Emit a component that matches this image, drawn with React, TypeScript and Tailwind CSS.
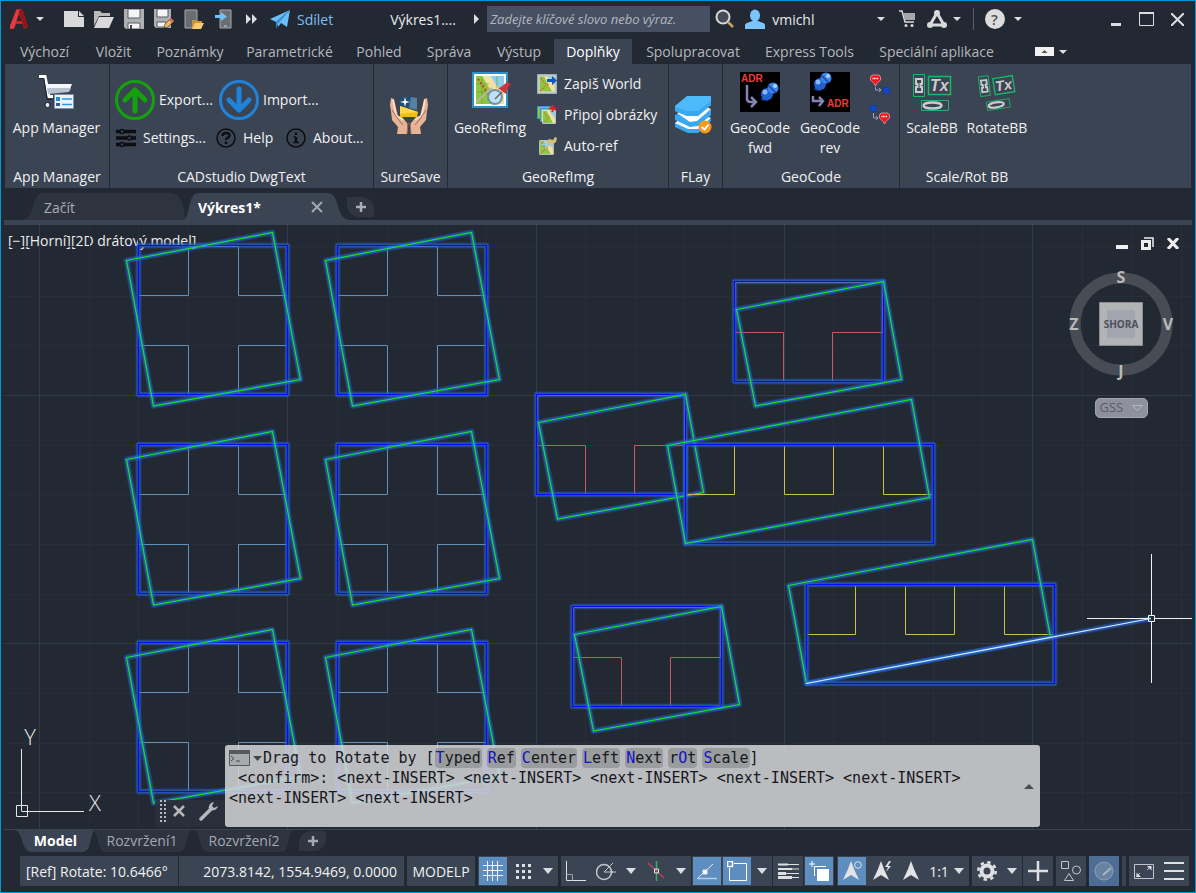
import type { ReactNode } from "react";
import { clsx } from "clsx";

/* ---------- small shared pieces ---------- */

function Caret({ size = "sm" }: { size?: "sm" | "md" }) {
  return size === "md" ? (
    <svg width="10" height="6" viewBox="0 0 10 6" fill="#dcdde0">
      <path d="M0 0h10L5 6z" />
    </svg>
  ) : (
    <svg width="8" height="4" viewBox="0 0 8 4" fill="#dcdde0">
      <path d="M0 0h8L4 4z" />
    </svg>
  );
}

function IconButton({
  label,
  className,
  children,
}: {
  label: string;
  className?: string;
  children: ReactNode;
}) {
  return (
    <button aria-label={label} className={clsx("flex shrink-0 items-center justify-center", className)}>
      {children}
    </button>
  );
}

/* ---------- title bar ---------- */

function LogoIcon() {
  return (
    <svg width="18" height="22" viewBox="0 0 18 22">
      <path d="M7 1h4l2 2 5 16-4 2-1.500-5H6l-2 5H0V18L6 2z" fill="#c8242c" />
      <path d="M11 1l2 2 5 16-4 1L9 4z" fill="#8f151c" />
      <path d="M9 6l2.500 7H6.700z" fill="#222933" />
      <path d="M7 1L0 18v3l4-1L9 4z" fill="#e23b42" />
    </svg>
  );
}

function NewIcon() {
  return (
    <svg width="20" height="20" viewBox="0 0 20 20" fill="#d9d9d9">
      <path d="M0 2h14v6h6v10H0z" />
      <path d="M15 2l5 5h-5z" />
    </svg>
  );
}

function OpenIcon() {
  return (
    <svg width="20" height="20" viewBox="0 0 20 20">
      <path d="M0 2h6l2 2h8v3H5L0 17z" fill="#b9b9b9" />
      <path d="M5 8h15l-5 11H0z" fill="#d9d9d9" />
    </svg>
  );
}

function SaveIcon() {
  return (
    <svg width="20" height="20" viewBox="0 0 20 20">
      <path d="M0 0h20v20H2l-2-2z" fill="#b0b0b0" />
      <path d="M4 0h12v9H4z" fill="#f4f4f4" stroke="#555b66" />
      <path d="M4 14h12v6H4z" fill="#f4f4f4" stroke="#555b66" />
      <path d="M6 16h2v4H6z" fill="#444" />
    </svg>
  );
}

function SaveAsIcon() {
  return (
    <svg width="20" height="20" viewBox="0 0 20 20">
      <path d="M0 0h17v19H2l-2-2z" fill="#b0b0b0" />
      <path d="M3 0h11v8H3z" fill="#f4f4f4" stroke="#555b66" />
      <path d="M3 13h9v5H3z" fill="#f4f4f4" stroke="#555b66" />
      <path d="M10 19l1-4 6-6 3 3-6 6z" fill="#f0b95a" stroke="#222933" strokeWidth=".6" />
      <path d="M17 9l3 3-2 2-3-3z" fill="#d86b57" />
    </svg>
  );
}

function DeviceOpenIcon() {
  return (
    <svg width="20" height="20" viewBox="0 0 20 20">
      <path d="M1 1h12v18H1z" fill="#6a6d72" stroke="#a7a9ad" />
      <path d="M8 11h4l1 1h5v7H8z" fill="#c99433" />
      <path d="M11 14h9l-3 6H8z" fill="#f6ca73" />
    </svg>
  );
}

function DeviceSaveIcon() {
  return (
    <svg width="20" height="20" viewBox="0 0 20 20">
      <path d="M6 1h11v18H6z" fill="#6a6d72" stroke="#a7a9ad" />
      <path d="M1 6h6V3l6 4.500L7 12V9H1z" fill="#6fc1ff" />
      <path d="M10 17h3" stroke="#d9d9d9" />
    </svg>
  );
}

function PlaneIcon() {
  return (
    <svg width="20" height="19" viewBox="0 0 20 19" fill="#69bdfb">
      <path d="M20 0L0 9l6 3z" />
      <path d="M20 0L8 12v5l3-4 6 4z" />
      <path d="M20 0L6 12v7l2-5z" fill="#3f92cf" />
    </svg>
  );
}

function TitleBar() {
  return (
    <header className="flex h-9 items-center text-[#e8e9eb]">
      <div className="flex items-center pl-[9px]">
        <LogoIcon />
        <IconButton label="Application menu" className="ml-2 w-2"><Caret /></IconButton>
        <div className="ml-5 flex items-center gap-[10px]">
          <IconButton label="New"><NewIcon /></IconButton>
          <IconButton label="Open"><OpenIcon /></IconButton>
          <IconButton label="Save"><SaveIcon /></IconButton>
          <IconButton label="Save as"><SaveAsIcon /></IconButton>
          <IconButton label="Open from mobile"><DeviceOpenIcon /></IconButton>
          <IconButton label="Save to mobile"><DeviceSaveIcon /></IconButton>
        </div>
        <IconButton label="More" className="ml-3">
          <svg width="12" height="10" viewBox="0 0 12 10" fill="#dcdde0">
            <path d="M0 0l5 5-5 5zM6 0l5 5-5 5z" />
          </svg>
        </IconButton>
        <button className="ml-3 flex items-center gap-[7px] text-[14px] text-[#7fbdf0]">
          <PlaneIcon />
          Sdílet
        </button>
      </div>
      <div className="ml-[57px] flex items-center">
        <span className="w-[84px] whitespace-nowrap text-[14px]">Výkres1....</span>
        <svg width="5" height="10" viewBox="0 0 5 10" fill="#dcdde0"><path d="M0 0l5 5-5 5z" /></svg>
        <input
          type="search"
          aria-label="Hledat"
          placeholder="Zadejte klíčové slovo nebo výraz."
          className="ml-2 h-[26px] w-[223px] bg-[#475063] px-[3px] text-[13px] italic text-white outline-none placeholder:text-[#b3b7bf]"
        />
        <IconButton label="Search" className="ml-[5px]">
          <svg width="20" height="20" viewBox="0 0 20 20" fill="none">
            <circle cx="8" cy="8" r="6.500" fill="#454c58" stroke="#d9d9d9" strokeWidth="2" />
            <path d="M13 13l5 5" stroke="#c99f63" strokeWidth="2.500" />
          </svg>
        </IconButton>
        <button className="ml-[10px] flex items-center gap-[7px] text-[14px]">
          <svg width="20" height="20" viewBox="0 0 20 20" fill="#7cc4fb">
            <ellipse cx="10" cy="6.500" rx="5" ry="6" />
            <path d="M0 20v-4c0-2 5-3 7-4h6c2 1 7 2 7 4v4z" />
          </svg>
          vmichl
        </button>
      </div>
      <div className="ml-[62px] flex items-center">
        <IconButton label="Account menu"><Caret /></IconButton>
        <IconButton label="Store" className="ml-[14px]">
          <svg width="17" height="18" viewBox="0 0 17 18" fill="none">
            <path d="M0 1h3l3 11h9" stroke="#d9d9d9" strokeWidth="1.500" />
            <path d="M4 3h12v7H6z" fill="#a5a7ab" />
            <circle cx="7" cy="15.500" r="1.500" fill="#d9d9d9" />
            <circle cx="13" cy="15.500" r="1.500" fill="#d9d9d9" />
          </svg>
        </IconButton>
        <IconButton label="Apps" className="ml-[11px]">
          <svg width="20" height="18" viewBox="0 0 20 18" fill="none">
            <path d="M10 3L3 15h14z" stroke="#d9d9d9" strokeWidth="3" />
            <g fill="#d9d9d9">
              <circle cx="10" cy="3" r="3" />
              <circle cx="3" cy="15" r="3" />
              <circle cx="17" cy="15" r="3" />
            </g>
          </svg>
        </IconButton>
        <IconButton label="Apps menu" className="ml-[6px]"><Caret /></IconButton>
        <span className="ml-3 h-[22px] w-px bg-[#59606c]" />
        <IconButton label="Help" className="ml-[11px] h-5 w-5 rounded-full bg-[#dcdcdc] text-[15px] font-semibold text-[#4a5059]">
          ?
        </IconButton>
        <IconButton label="Help menu" className="ml-[9px]"><Caret /></IconButton>
      </div>
      <div className="ml-auto flex items-center gap-[17px] pr-[11px]">
        <IconButton label="Minimize">
          <svg width="12" height="14" viewBox="0 0 12 14"><path d="M1 11h10v3H1z" fill="#dcdde0" /></svg>
        </IconButton>
        <IconButton label="Maximize">
          <svg width="15" height="14" viewBox="0 0 15 14" fill="none" stroke="#dcdde0">
            <path d="M.5 1.500v12h14v-12z" />
            <path d="M0 1h15" strokeWidth="2" />
          </svg>
        </IconButton>
        <IconButton label="Close">
          <svg width="13" height="13" viewBox="0 0 13 13" stroke="#dcdde0" strokeWidth="2"><path d="M0 0l13 13M13 0L0 13" /></svg>
        </IconButton>
      </div>
    </header>
  );
}

/* ---------- ribbon ---------- */

const ribbonTabs = [
  { label: "Výchozí", width: "w-[75px]" },
  { label: "Vložit", width: "w-[63px]" },
  { label: "Poznámky", width: "w-[90px]" },
  { label: "Parametrické", width: "w-[109px]" },
  { label: "Pohled", width: "w-[70px]" },
  { label: "Správa", width: "w-[70px]" },
  { label: "Výstup", width: "w-[70px]" },
  { label: "Doplňky", width: "w-[78px]", active: true },
  { label: "Spolupracovat", width: "w-[122px]" },
  { label: "Express Tools", width: "w-[111px]" },
  { label: "Speciální aplikace", width: "w-[143px]" },
];

function RibbonTabs() {
  return (
    <nav className="mt-[2px] flex h-[25px] items-stretch pl-[6px]">
      {ribbonTabs.map((t) => (
        <button
          key={t.label}
          className={clsx(
            "shrink-0 whitespace-nowrap text-center text-[14px]",
            t.width,
            t.active ? "bg-[#3b4453] text-white" : "text-[#b4b7bc]",
          )}
        >
          {t.label}
        </button>
      ))}
      <IconButton label="Minimize ribbon" className="ml-[27px] gap-[5px]">
        <svg width="19" height="9" viewBox="0 0 19 9">
          <path d="M0 0h19v9H0z" fill="#f1f1f1" />
          <path d="M6.500 6L9.500 3l3 3z" fill="#555" />
        </svg>
        <Caret />
      </IconButton>
    </nav>
  );
}

function Panel({ title, className, children }: { title: string; className: string; children: ReactNode }) {
  return (
    <section className={clsx("flex shrink-0 flex-col border-[#222933] text-[14px] text-[#f0f1f2]", className)}>
      <div className="flex-1 pt-2">{children}</div>
      <h2 className="pb-px text-center leading-5">{title}</h2>
    </section>
  );
}

function BigButton({ icon, className, children }: { icon: ReactNode; className?: string; children?: ReactNode }) {
  return (
    <button className={clsx("flex flex-col items-center whitespace-nowrap leading-5", className)}>
      <span className="flex h-[46px] items-start justify-center">{icon}</span>
      {children}
    </button>
  );
}

function RowButton({ icon, className, children }: { icon: ReactNode; className?: string; children: ReactNode }) {
  return (
    <button className={clsx("flex shrink-0 items-center whitespace-nowrap text-left leading-5", className)}>
      {icon}
      {children}
    </button>
  );
}

function AppManagerIcon() {
  return (
    <svg width="38" height="40" viewBox="0 -2 38 40">
      <path d="M1 2.500h6l4 20h4" fill="none" stroke="#fff" strokeWidth="3" />
      <path d="M1 4.500h5l3 21h5" fill="none" stroke="#1b2033" strokeWidth="1" />
      <path d="M8 10h26l-2 5H9z" fill="#f4f6fa" />
      <path d="M9 14h24l-2 4-21 2z" fill="#b9c2d0" />
      <circle cx="9.500" cy="31" r="2.500" fill="#e9edf3" stroke="#1b2033" />
      <path d="M16.500 20.500h19v14h-19z" fill="#eaf3fa" stroke="#7c93ad" />
      <path d="M18 23h4v4h-4z" fill="#1e8fe0" />
      <path d="M18 29h4v3h-4z" fill="#3a5b96" />
      <path d="M24 25h10M24 30.500h10" stroke="#2b9ae6" strokeWidth="1.500" />
    </svg>
  );
}

function ArrowCircleIcon({ down }: { down?: boolean }) {
  const color = down ? "#1f83dc" : "#14a10c";
  return (
    <svg width="40" height="40" viewBox="0 0 40 40" fill="none" stroke={color}>
      <circle cx="20" cy="20" r="18.500" strokeWidth="3" />
      <path
        d={down ? "M20 9v20M10 20l10 10 10-10" : "M20 31V11M10 20l10-10 10 10"}
        strokeWidth="5"
        strokeLinecap="round"
        strokeLinejoin="round"
      />
    </svg>
  );
}

function SettingsIcon() {
  return (
    <svg width="20" height="20" viewBox="0 0 20 20" stroke="#0c0e12" fill="#3b4453">
      <path d="M0 3.500h20M0 10h20M0 16.500h20" strokeWidth="3.500" />
      <circle cx="6" cy="3.500" r="2" strokeWidth="1.500" />
      <circle cx="13.500" cy="10" r="2" strokeWidth="1.500" />
      <circle cx="6" cy="16.500" r="2" strokeWidth="1.500" />
    </svg>
  );
}

function HelpIcon() {
  return (
    <svg width="20" height="20" viewBox="0 0 20 20" fill="none" stroke="#0c0e12">
      <circle cx="10" cy="10" r="9" strokeWidth="1.500" />
      <path d="M6.500 8c0-4 7-4 7-.5 0 2.500-3.500 2-3.500 4.500" strokeWidth="2.500" />
      <path d="M10 13.500v2.500" strokeWidth="2.500" />
    </svg>
  );
}

function AboutIcon() {
  return (
    <svg width="20" height="20" viewBox="0 0 20 20" fill="none" stroke="#0c0e12">
      <circle cx="10" cy="10" r="9" strokeWidth="1.500" />
      <path d="M10 4.500v2.500M10 9v5.500" strokeWidth="2.500" />
      <path d="M7.500 9h2.500M7 14.500h6" strokeWidth="1.500" />
    </svg>
  );
}

function HandsIcon() {
  return (
    <svg width="40" height="40" viewBox="0 0 40 40">
      <path d="M12 2h10l6 1v12l-17-4z" fill="#1f4f78" />
      <path d="M22 2l6 1v12l-8-2z" fill="#55809f" />
      <path d="M11 11l18 6-1 5H11z" fill="#f3bd17" />
      <path d="M11 11l9 3 9 3-18 2z" fill="#ffd84c" />
      <path d="M16 2l1 4 4 1-4 1-1 4-1-4-4-1 4-1z" fill="#fff" />
      <path d="M2 3l3 1 2 9 2 8 4 1 5 6 1 5-1 6H8l1-7-6-7-1-9-1-6z" fill="#e6b497" />
      <path d="M38 3l-3 1-2 9-2 8-4 1-5 6-1 5 1 6h10l-1-7 6-7 1-9 1-6z" fill="#e6b497" />
      <path d="M4 5l3 15 7 5M36 5l-3 15-7 5" fill="none" stroke="#fbe3d3" strokeWidth="1.500" />
      <path d="M3 15l6 9 5 6M37 15l-6 9-5 6M19 28l-1 10M21 28l1 10" fill="none" stroke="#a5694f" />
    </svg>
  );
}

function MapIcon() {
  return (
    <svg width="36" height="38" viewBox="1 0 36 38" className="overflow-visible">
      <path d="M2 1h34v34H2z" fill="#fff" stroke="#2c93c9" strokeWidth="2" />
      <path d="M5 4h28v28H5z" fill="#8fc63f" />
      <path d="M18 4h15v18L23 14z" fill="#8fcdf0" />
      <path d="M11 4h9l5 9 8 6v13h-9l-4-13z" fill="#f4e0a4" />
      <path d="M5 12h13M5 20h13M11 4v28M26 4v12" stroke="#6aa52c" strokeWidth=".7" />
      <path d="M7 7l7 10 2 6" fill="none" stroke="#d8302c" strokeWidth="2" strokeDasharray="2 2" />
      <path d="M5 30l16-14" stroke="#b9b9a4" strokeWidth="2" />
      <circle cx="24" cy="25" r="7" fill="#bfe0f3" stroke="#7592a5" strokeWidth="2" />
      <path d="M24 27l7-7" stroke="#666" strokeWidth="1.500" />
      <path d="M27 16l3-1 5-4 1-2 4 4-2 1-2 5-1 3z" fill="#c9363d" />
    </svg>
  );
}

function MiniMap() {
  return (
    <>
      <path d="M2 2h16v16H2z" fill="#8fc63f" stroke="#d6e6ee" />
      <path d="M10 2.500h7.500v11z" fill="#8fcdf0" />
      <path d="M7 2.500h3.500l7 9v6H15z" fill="#f4e0a4" />
      <path d="M4 4l4 6M3 17l9-8" stroke="#d66a3c" strokeWidth="1.200" strokeDasharray="2 1" />
    </>
  );
}

function WorldIcon() {
  return (
    <svg width="20" height="20" viewBox="0 0 20 20">
      <path d="M0 0h20v20H0z" fill="#a5adb7" />
      <MiniMap />
      <path d="M10 5h5V2l5 4.500-5 4.500V8h-5z" fill="#1358c0" />
    </svg>
  );
}

function AttachIcon() {
  return (
    <svg width="20" height="20" viewBox="0 0 20 20">
      <path d="M.5 1.500h13v12H.5z" fill="#8fc63f" stroke="#3a97c9" />
      <path d="M3.500 3.500h13v13h-13z" fill="#9ed04d" stroke="#3a97c9" />
      <g transform="translate(4 4) scale(.8)"><MiniMap /></g>
      <path d="M15.500 0v7M12 3.500h7" stroke="#ed1c24" strokeWidth="2" />
    </svg>
  );
}

function AutoRefIcon() {
  return (
    <svg width="20" height="20" viewBox="0 0 20 20">
      <g transform="translate(1 3) scale(.85)"><MiniMap /></g>
      <path d="M8 8l4-5 4 1 2-3 2 1-1 4-4 3-5 2z" fill="#d9bd7b" />
      <path d="M9 4v9M4.500 8.500h9" stroke="#8ed2ff" strokeWidth="1.500" />
    </svg>
  );
}

function LayersIcon() {
  return (
    <svg width="39" height="39" viewBox="0 0 39 39">
      <path d="M1 28l5-4 11 7 19-9 1 4-13 12H14L1 32z" fill="#39a9ef" />
      <path d="M1 28l5-4 11 5 15-8 5 2-13 11H14z" fill="#fff" />
      <path d="M1 20l6-3 10 5 15-9 5 2v5L24 31l-8 1L1 25z" fill="#39a9ef" />
      <path d="M3 18l4-2 9 4 16-8 5 2-14 12-7 1z" fill="#fff" />
      <path d="M1 11L13 1h24v9L24 21H13L1 16z" fill="#4dbbfb" />
      <path d="M1 12l12 4h11L37 6v4L24 21H13L1 16z" fill="#39a9ef" />
      <circle cx="31" cy="32" r="6.500" fill="#f79a1b" />
      <path d="M27.500 32l3 2.500 4-5" fill="none" stroke="#fff" strokeWidth="2" />
    </svg>
  );
}

function Pins() {
  return (
    <g>
      <path d="M2 18l2-6 6-2 3 6-5 3z" fill="#1743a8" />
      <circle cx="8" cy="12" r="6" fill="#2061cf" />
      <circle cx="14" cy="6" r="5.500" fill="#3a83ea" />
      <path d="M9 3l8 8" stroke="#1743a8" strokeWidth="1.500" />
      <circle cx="16" cy="4" r="2" fill="#a8d4ff" />
      <circle cx="6" cy="10" r="2.500" fill="#84b8f8" />
    </g>
  );
}

function GeoCodeIcon({ reverse }: { reverse?: boolean }) {
  return (
    <svg width="40" height="40" viewBox="0 0 40 40">
      <path d="M0 0h40v40H0z" fill="#000" />
      <g transform={reverse ? "translate(2 0)" : "translate(19 10)"}>
        <Pins />
      </g>
      <path
        d={reverse ? "M3 24v5h9M9 25l4 4-4 5" : "M7 13v14q0 3 4 3h4M11 25l5 5-5 5"}
        fill="none"
        stroke="#8482b4"
        strokeWidth="2.500"
      />
      <text
        x={reverse ? 17 : 1}
        y={reverse ? 35 : 10}
        fontFamily="Liberation Sans, sans-serif"
        fontSize="10"
        fontWeight="700"
        fill="#ef3b34"
      >
        ADR
      </text>
    </svg>
  );
}

function PinLinkIcon({ reverse }: { reverse?: boolean }) {
  return (
    <svg width="20" height="20" viewBox="0 0 20 20">
      <g transform={reverse ? "translate(9 7)" : "translate(0 0)"}>
        <path d="M2 1h7l1.500 2v3L7 9.500 5.500 12 4 9.500.5 6V3z" fill="#ef1720" stroke="#f6c9cb" strokeWidth=".6" />
        <path d="M2.500 4.500h6" stroke="#fff" strokeWidth="1.500" strokeDasharray="1 .5" />
      </g>
      <g transform={reverse ? "translate(0 0)" : "translate(13 13)"}>
        <path d="M.5.5h6v6h-6z" fill="#1048c8" stroke="#0c3596" strokeDasharray="1 1" />
      </g>
      <path
        d={reverse ? "M3.500 8v5h4M6 11l2 2-2 2" : "M5.500 13v3h5M9 14l2 2-2 2"}
        fill="none"
        stroke="#9b9bd0"
      />
    </svg>
  );
}

function BoundingIcon({ rotated }: { rotated?: boolean }) {
  return (
    <svg width="40" height="40" viewBox="0 0 40 40" fill="none">
      <g transform={rotated ? "rotate(-7 7 14) translate(1 2) scale(.9)" : undefined}>
        <path d="M1.500 2.500h11v22h-11z" stroke="#19b66b" />
        <path d="M4 7h6v5H8.500v3H10v5H4v-5h1.500v-3H4z" stroke="#c9cbce" strokeWidth="2" />
      </g>
      <g transform={rotated ? "rotate(-9 27 13) translate(2 1) scale(.9)" : undefined}>
        <path d="M16.500 4.500h22v18h-22z" stroke="#19b66b" strokeWidth="1.500" />
        <text x="18" y="19" fontFamily="Liberation Sans, sans-serif" fontSize="16" fontStyle="italic" fontWeight="700" fill="#c9cbce">
          Tx
        </text>
      </g>
      <g transform={rotated ? "rotate(-9 22 34) translate(2 4) scale(.85)" : undefined}>
        <path d="M9.500 28.500h27v10h-27z" stroke="#19b66b" />
        <ellipse cx="20.500" cy="33.500" rx="9" ry="3" stroke="#c9cbce" strokeWidth="2.500" />
      </g>
    </svg>
  );
}

function Ribbon() {
  return (
    <div className="mx-1 flex h-[124px] overflow-hidden bg-[#3b4453]">
      <Panel title="App Manager" className="w-[105px] border-r">
        <BigButton icon={<AppManagerIcon />} className="w-full pr-px">App Manager</BigButton>
      </Panel>
      <Panel title="CADstudio DwgText" className="w-[264px] border-r">
        <div className="flex h-10 items-center pl-[5px] pt-[16px]">
          <RowButton icon={<ArrowCircleIcon />} className="w-[104px] gap-1">Export...</RowButton>
          <RowButton icon={<ArrowCircleIcon down />} className="gap-1">Import...</RowButton>
        </div>
        <div className="mt-4 flex items-center pl-[6px]">
          <RowButton icon={<SettingsIcon />} className="w-[100px] gap-[7px]">Settings...</RowButton>
          <RowButton icon={<HelpIcon />} className="w-[70px] gap-[7px]">Help</RowButton>
          <RowButton icon={<AboutIcon />} className="gap-[7px]">About...</RowButton>
        </div>
      </Panel>
      <Panel title="SureSave" className="w-[74px] border-r">
        <BigButton icon={<HandsIcon />} className="w-full pr-1 pt-[23px]" />
      </Panel>
      <Panel title="GeoRefImg" className="w-[221px] border-r">
        <div className="flex pl-1">
          <BigButton icon={<MapIcon />} className="w-[76px]">GeoRefImg</BigButton>
          <div className="ml-[9px] flex flex-col gap-[11px] pt-[2px]">
            <RowButton icon={<WorldIcon />} className="gap-[7px]">Zapiš World</RowButton>
            <RowButton icon={<AttachIcon />} className="gap-[7px]">Připoj obrázky</RowButton>
            <RowButton icon={<AutoRefIcon />} className="gap-[7px]">Auto-ref</RowButton>
          </div>
        </div>
      </Panel>
      <Panel title="FLay" className="w-[54px] border-r">
        <BigButton icon={<LayersIcon />} className="w-full pr-1 pt-[23px]" />
      </Panel>
      <Panel title="GeoCode" className="w-[177px] border-r">
        <div className="flex pl-[2px]">
          <BigButton icon={<GeoCodeIcon />} className="w-[70px]">
            <span>GeoCode<br />fwd</span>
          </BigButton>
          <BigButton icon={<GeoCodeIcon reverse />} className="w-[70px]">
            <span>GeoCode<br />rev</span>
          </BigButton>
          <div className="ml-[5px] flex flex-col gap-[11px] pt-[2px]">
            <IconButton label="Link forward"><PinLinkIcon /></IconButton>
            <IconButton label="Link reverse"><PinLinkIcon reverse /></IconButton>
          </div>
        </div>
      </Panel>
      <Panel title="Scale/Rot BB" className="w-[134px]">
        <div className="flex pl-px">
          <BigButton icon={<BoundingIcon />} className="w-[62px]">ScaleBB</BigButton>
          <BigButton icon={<BoundingIcon rotated />} className="w-[68px]">RotateBB</BigButton>
        </div>
      </Panel>
    </div>
  );
}

/* ---------- drawing tabs ---------- */

function DocumentTabs() {
  return (
    <div className="mx-[3px] mt-1 flex h-7 shrink-0 items-stretch">
      <button className="ml-[18px] w-[163px] bg-[#2d3440] pl-[22px] pt-[2px] text-left text-[14px] text-[#a9adb4] [clip-path:path('M0_28C14_26_8_1_22_1H148C158_1_163_12_163_28Z')]">
        Začít
      </button>
      <div className="-ml-[2px] flex w-[166px] items-center bg-[#3b4453] pl-[15px] pt-[2px] text-[14px] font-bold text-white [clip-path:path('M0_28C8_26_4_1_16_1H144C158_1_152_26_166_28Z')]">
        <button>Výkres1*</button>
        <IconButton label="Close drawing" className="ml-auto mr-[26px]">
          <svg width="12" height="12" viewBox="0 0 12 12" stroke="#a3a7ae" strokeWidth="2"><path d="M1 1l10 10M11 1L1 11" /></svg>
        </IconButton>
      </div>
      <IconButton
        label="New drawing"
        className="-ml-[2px] mb-[3px] mt-[5px] w-[27px] rounded-bl-xl rounded-tr-xl bg-[#2f3642]"
      >
        <svg width="10" height="10" viewBox="0 0 10 10" stroke="#a9adb4" strokeWidth="2.500"><path d="M5 0v10M0 5h10" /></svg>
      </IconButton>
    </div>
  );
}

/* ---------- model space ---------- */

const minorX = Array.from({ length: 24 }, (_, i) => Math.round(39 + i * 49.65) + 0.5);
const minorY = Array.from({ length: 12 }, (_, i) => Math.round(246 + i * 49.65) + 0.5);

type Shape = { rect: string; frame: string; detail: string; stroke: string };

const room: Shape = {
  rect: "M138.500 245.500H287.500V394.500H138.500Z",
  frame: "M126.500 260.500L272.500 232.500L300.500 379.500L153.500 406Z",
  detail: "M138.500 295.500H188.500V246.500H238.500V295.500H287.500M138.500 345.500H188.500V394.500H238.500V345.500H287.500",
  stroke: "#6291bb",
};

const hall: Shape = {
  rect: "M734.500 281.500H883.500V381.500H734.500Z",
  frame: "M736.500 309.500L883.500 281.500L901.500 379.500L755.500 406Z",
  detail: "M734.500 332.500H783.500V381.500H832.500V332.500H882.500V282.500H735.500Z",
  stroke: "#c25a5c",
};

const strip: Shape = {
  rect: "M685.500 444.500H933.500V543.500H685.500Z",
  frame: "M667.500 445.500L911.500 399.500L929.500 497.500L685.500 543.500Z",
  detail: "M686.500 494.500H734.500V446M784.500 446V494.500H833.500V446M883.500 446V494.500H932.500",
  stroke: "#c9c24a",
};

const placed: { shape: Shape; x: number; y: number }[] = [
  ...[0, 1, 2].flatMap((row) =>
    [0, 1].map((col) => ({ shape: room, x: Math.round(col * 198.6), y: Math.round(row * 198.6) })),
  ),
  { shape: hall, x: 0, y: 0 },
  { shape: hall, x: -198, y: 113 },
  { shape: hall, x: -162, y: 325 },
  { shape: strip, x: 0, y: 0 },
  { shape: strip, x: 121, y: 140 },
];

function Glow({ d, color }: { d: string; color: string }) {
  return (
    <>
      <path d={d} stroke="#2460cc" strokeOpacity=".35" strokeWidth="6" strokeLinejoin="round" />
      <path d={d} stroke="#2a6ae0" strokeOpacity=".45" strokeWidth="4" strokeLinejoin="round" />
      <path d={d} stroke={color} strokeWidth="1.200" />
    </>
  );
}

function Drawing() {
  return (
    <svg
      className="absolute inset-0 h-full w-full"
      viewBox="4 225 1188 604"
      preserveAspectRatio="xMinYMin slice"
      fill="none"
    >
      {minorX.map((x, i) => (
        <path key={x} d={`M${x} 225V829`} stroke={i % 5 === 0 ? "#333a49" : "#272e39"} />
      ))}
      {minorY.map((y, i) => (
        <path key={y} d={`M4 ${y}H1192`} stroke={i % 5 === 3 ? "#333a49" : "#272e39"} />
      ))}

      {placed.map(({ shape, x, y }) => (
        <g key={`${x} ${y} ${shape.stroke}`} transform={`translate(${x} ${y})`}>
          <path d={shape.detail} stroke={shape.stroke} />
          <Glow d={shape.rect} color="#0808ff" />
          <Glow d={shape.frame} color="#12e62c" />
        </g>
      ))}

      <Glow d="M806 683.500L1151 618.500" color="#d8ecff" />

      {/* crosshair */}
      <path d="M1087 618.500H1148M1155 618.500H1192M1151.500 554V615M1151.500 622V683" stroke="#f2f2f2" />
      <path d="M1148.500 615.500h6v6h-6z" stroke="#fff" />

      {/* UCS icon */}
      <path d="M16.500 805.500h11v11h-11zM21.500 749V811M21.500 811.500H84" stroke="#e6e6e6" />
      <g fill="#e6e6e6" fontSize="22" fontWeight="300" textAnchor="middle">
        <text x="30" y="745">Y</text>
        <text x="95" y="811">X</text>
      </g>
    </svg>
  );
}

function ViewCube() {
  return (
    <div className="absolute right-[18px] top-[40px] flex flex-col items-center">
      <svg width="106" height="120" viewBox="1068 265 106 120">
        <circle cx="1121" cy="324" r="46" fill="none" stroke="#484d55" strokeWidth="11" />
        <path d="M1099.500 302.500h43v43h-43z" fill="#b2b3b5" stroke="#8a8c90" />
        <path d="M1107 310h28v28h-28z" fill="#a2a5ae" />
        <g fontWeight="700" textAnchor="middle" fill="#b9babc">
          <text x="1121" y="283" fontSize="16">S</text>
          <text x="1074" y="330" fontSize="16">Z</text>
          <text x="1168" y="330" fontSize="16">V</text>
          <text x="1121" y="377" fontSize="16">J</text>
          <text x="1121" y="328" fontSize="10" fill="#4c5058">SHORA</text>
        </g>
      </svg>
      <button className="mt-[13px] flex h-5 w-[53px] items-center justify-between rounded-[5px] border border-[#a3a5b0] bg-[#8e909c] px-1 text-[13px] text-[#5a5c68]">
        GSS
        <svg width="11" height="6" viewBox="0 0 11 6" fill="none" stroke="#b4b6c2"><path d="M.5.5h10l-5 5z" /></svg>
      </button>
    </div>
  );
}

const commandOptions: [string, string, string][] = [
  ["", "T", "yped"],
  ["", "R", "ef"],
  ["", "C", "enter"],
  ["", "L", "eft"],
  ["", "N", "ext"],
  ["r", "O", "t"],
  ["", "S", "cale"],
];

function CommandLine() {
  return (
    <div className="absolute bottom-[2px] left-[151px] flex items-end">
      <div className="flex h-[27px] w-[70px] items-center rounded-l bg-[#2b313c]/90 pb-[6px] pl-1">
        <svg width="8" height="22" viewBox="0 0 8 22" stroke="#b5b7bb" strokeWidth="2" strokeDasharray="2 2">
          <path d="M2 0v22M6 0v22" />
        </svg>
        <IconButton label="Close command line" className="ml-[6px]">
          <svg width="12" height="12" viewBox="0 0 12 12" stroke="#b5b7bb" strokeWidth="2.500"><path d="M1 1l10 10M11 1L1 11" /></svg>
        </IconButton>
        <IconButton label="Customize" className="ml-[14px]">
          <svg width="20" height="20" viewBox="0 0 20 20">
            <path d="M2 18L12 8" stroke="#b5b7bb" strokeWidth="3.500" strokeLinecap="round" />
            <path d="M15 1a5.500 5.500 0 0 0-5 7 5.500 5.500 0 0 0 9-3l-4 2-2-2z" fill="#b5b7bb" />
          </svg>
        </IconButton>
      </div>
      <div className="relative h-[82px] w-[815px] rounded-[3px] bg-[#d6d6d8]/85 pl-1 pt-[3px] font-['DejaVu_Sans_Mono','Liberation_Mono',monospace] text-[15px] leading-5 text-[#16181c]">
        <div className="flex items-center whitespace-pre">
          <svg width="21" height="16" viewBox="0 0 21 16">
            <path d="M.5.5h20v15H.5z" fill="#a9aaac" stroke="#55585d" />
            <path d="M0 0h21v4H0z" fill="#55585d" />
            <path d="M2 6l3 2.500L2 11M7 11h4" fill="none" stroke="#44474c" />
          </svg>
          <svg width="9" height="5" viewBox="0 0 9 5" className="ml-[3px] mr-px" fill="#44474c"><path d="M0 0h9L4.500 5z" /></svg>
          {"Drag to Rotate by ["}
          <span className="flex gap-[5px]">
            {commandOptions.map(([pre, key, post]) => (
              <button key={post} className="rounded bg-[#9b9c9e] px-px leading-5">
                {pre}
                <span className="text-[#1414c4]">{key}</span>
                {post}
              </button>
            ))}
          </span>
          ]
        </div>
        <p className="whitespace-pre">{" <confirm>: <next-INSERT> <next-INSERT> <next-INSERT> <next-INSERT> <next-INSERT>"}</p>
        <p className="whitespace-pre">{"<next-INSERT> <next-INSERT>"}</p>
        <IconButton label="Command history" className="absolute right-[6px] top-[39px]">
          <svg width="10" height="5" viewBox="0 0 10 5" fill="#4a4d52"><path d="M0 5h10L5 0z" /></svg>
        </IconButton>
      </div>
    </div>
  );
}

function ModelSpace() {
  return (
    <main className="relative mx-[3px] min-h-[400px] flex-1 overflow-hidden border-t-[5px] border-[#3b4453]">
      <p className="px-1 pt-[6px] text-[14px] leading-5 text-[#ececec]">[−][Horní][2D drátový model]</p>
      <Drawing />
      <div className="absolute right-[13px] top-3 flex items-center gap-[13px]">
        <IconButton label="Minimize view">
          <svg width="12" height="12" viewBox="0 0 12 12"><path d="M0 7h12v4H0z" fill="#eee" /></svg>
        </IconButton>
        <IconButton label="Restore view">
          <svg width="13" height="13" viewBox="0 0 13 13" fill="none" stroke="#eee">
            <path d="M1.500 4.500h7v7h-7z" strokeWidth="3" />
            <path d="M3 1h9v9" strokeWidth="1.500" />
          </svg>
        </IconButton>
        <IconButton label="Close view">
          <svg width="12" height="11" viewBox="0 0 12 11" stroke="#eee" strokeWidth="3"><path d="M1 0l10 11M11 0L1 11" /></svg>
        </IconButton>
      </div>
      <ViewCube />
      <CommandLine />
    </main>
  );
}

/* ---------- layout tabs and status bar ---------- */

function LayoutTabs() {
  return (
    <div className="mx-[3px] flex h-6 shrink-0 items-start border-t border-[#3f424b] text-[14px] text-[#a4a8af]">
      <button className="ml-[10px] h-[22px] w-[83px] bg-[#3b4453] font-bold leading-5 text-white [clip-path:path('M0_0C10_0_6_22_18_22H68C80_22_74_0_83_0Z')]">
        Model
      </button>
      <button className="-ml-[6px] h-[22px] w-[102px] bg-[#2d3440] leading-5 [clip-path:path('M0_0C8_0_6_22_14_22H88C98_22_94_0_102_0Z')]">
        Rozvržení1
      </button>
      <button className="h-[22px] w-[102px] bg-[#2d3440] leading-5 [clip-path:path('M0_0C8_0_6_22_14_22H88C98_22_94_0_102_0Z')]">
        Rozvržení2
      </button>
      <IconButton label="New layout" className="ml-1 mt-px h-5 w-[27px] rounded-br-xl rounded-tl-xl bg-[#2f3642]">
        <svg width="10" height="10" viewBox="0 0 10 10" stroke="#a4a8af" strokeWidth="2.500"><path d="M5 0v10M0 5h10" /></svg>
      </IconButton>
    </div>
  );
}

function Toggle({ label, on, children }: { label: string; on?: boolean; children: ReactNode }) {
  return (
    <IconButton label={label} className="h-full w-[30px]">
      <span className={clsx("flex h-7 w-7 items-center justify-center", on && "bg-[#5e8dc0]")}>{children}</span>
    </IconButton>
  );
}

function MenuCaret({ label }: { label: string }) {
  return (
    <IconButton label={label} className="h-full w-5">
      <Caret size="md" />
    </IconButton>
  );
}

function Cell({ className, children }: { className?: string; children?: ReactNode }) {
  return <div className={clsx("flex h-[30px] shrink-0 items-center", className ?? "bg-[#3b4453]")}>{children}</div>;
}

function CompassMark({ extra }: { extra?: ReactNode }) {
  return (
    <svg width="20" height="20" viewBox="0 0 20 20" fill="#e2e3e5">
      <path d="M9 0l3 8 5 11-8-5-8 5L6 8z" />
      {extra}
    </svg>
  );
}

function StatusBar() {
  return (
    <footer className="mb-[6px] mt-[3px] flex gap-[3px] overflow-hidden pl-[19px] text-[14px] text-[#f0f1f2]">
      <div className="flex gap-px">
        <Cell className="w-[158px] whitespace-nowrap bg-[#3b4453] pl-[6px]">[Ref] Rotate: 10.6466°</Cell>
        <Cell className="w-[225px] justify-end whitespace-nowrap bg-[#3b4453] pr-[7px]">2073.8142, 1554.9469, 0.0000</Cell>
      </div>
      <Cell className="w-[68px] justify-center bg-[#3b4453]"><button>MODELP</button></Cell>
      <Cell>
        <Toggle label="Grid" on>
          <svg width="20" height="20" viewBox="0 0 20 20" stroke="#eef2f7"><path d="M4.500 0v20M9.500 0v20M14.500 0v20M0 4.500h20M0 9.500h20M0 14.500h20" /></svg>
        </Toggle>
        <Toggle label="Snap">
          <svg width="17" height="17" viewBox="0 0 17 17" stroke="#dfe0e3" strokeWidth="3" strokeDasharray="3 3">
            <path d="M1 2.500h15M1 8.500h15M1 14.500h15" />
          </svg>
        </Toggle>
        <MenuCaret label="Snap settings" />
      </Cell>
      <div className="flex gap-px">
        <Cell>
          <Toggle label="Ortho">
            <svg width="20" height="20" viewBox="0 0 20 20" fill="none" stroke="#dfe0e3">
              <path d="M.5 0v19.500H20" />
              <path d="M.5 13.500h6v6" stroke="#9a9ea6" />
            </svg>
          </Toggle>
          <Toggle label="Polar tracking">
            <svg width="20" height="20" viewBox="0 0 20 20" fill="none" stroke="#c3c5c9">
              <circle cx="8" cy="11" r="7.500" strokeWidth="1.500" />
              <path d="M8 11h12M8 11l9-9M14 8l3 3-3 3" />
            </svg>
          </Toggle>
          <MenuCaret label="Polar settings" />
          <Toggle label="Isometric drafting">
            <svg width="18" height="20" viewBox="0 0 18 20" fill="none">
              <path d="M9.500 0v20" stroke="#41a86c" strokeWidth="1.500" />
              <path d="M1 2l16 15" stroke="#b04850" strokeWidth="1.500" />
              <path d="M7.500 8h4v4h-4z" stroke="#dfe0e3" />
            </svg>
          </Toggle>
          <MenuCaret label="Isometric settings" />
        </Cell>
        <Cell>
          <Toggle label="Object snap tracking" on>
            <svg width="20" height="18" viewBox="0 0 20 18" fill="none" stroke="#e8eef5">
              <path d="M1 16L16 2" />
              <path d="M0 16.500h20" stroke="#b9cde3" strokeWidth="1.500" />
              <path d="M6 8h4v4H6z" fill="#fff" />
            </svg>
          </Toggle>
          <Toggle label="Object snap" on>
            <svg width="20" height="20" viewBox="0 0 20 20" fill="none" stroke="#fff">
              <path d="M7 2.500h12.500v17h-17V7" />
              <path d="M.5.5h5v5h-5z" strokeWidth="1.500" />
            </svg>
          </Toggle>
          <MenuCaret label="Object snap settings" />
        </Cell>
        <Cell>
          <Toggle label="Lineweight">
            <svg width="21" height="16" viewBox="0 0 21 16" stroke="#dfe0e3">
              <path d="M0 1.500h10M0 6h14" strokeWidth="2" />
              <path d="M0 10.500h8M0 14.500h14" strokeWidth="3" />
              <path d="M10 1.500h11M14 6h7M8 10.500h13M14 14.500h7" />
            </svg>
          </Toggle>
        </Cell>
        <Cell>
          <Toggle label="Selection cycling" on>
            <svg width="20" height="20" viewBox="0 0 20 20" fill="none" stroke="#fff">
              <path d="M3 0v6M0 3h6M5.500 15V5.500H17" />
              <path d="M8 8h12v12H8z" fill="#fff" stroke="none" />
            </svg>
          </Toggle>
        </Cell>
      </div>
      <Cell>
        <Toggle label="Annotation visibility" on>
          <CompassMark extra={<circle cx="16" cy="4" r="3.300" fill="none" stroke="#e2e3e5" />} />
        </Toggle>
        <Toggle label="Auto scale">
          <CompassMark extra={<path d="M17 0l-4 6h3l-2 5 5-6h-3l3-5z" />} />
        </Toggle>
        <Toggle label="Annotation scale"><CompassMark /></Toggle>
        <button className="w-[22px] pl-[2px] text-center">1:1</button>
        <MenuCaret label="Scale list" />
      </Cell>
      <div className="flex gap-px">
        <Cell>
          <Toggle label="Workspace">
            <svg width="20" height="20" viewBox="0 0 20 20" fill="none" stroke="#dfe0e3">
              <circle cx="10" cy="10" r="5.500" strokeWidth="4" />
              <circle cx="10" cy="10" r="8.700" strokeWidth="2.600" strokeDasharray="3.400 3.430" />
            </svg>
          </Toggle>
          <MenuCaret label="Workspace list" />
        </Cell>
        <Cell>
          <Toggle label="Annotation monitor">
            <svg width="20" height="20" viewBox="0 0 20 20" stroke="#dfe0e3" strokeWidth="2.500"><path d="M10 0v20M0 10h20" /></svg>
          </Toggle>
        </Cell>
      </div>
      <Cell>
        <Toggle label="Isolate objects">
          <svg width="20" height="20" viewBox="0 0 20 20" fill="none" stroke="#c3c5c9">
            <path d="M.5.5h7v7h-7zM8 12.500l-4.500 7h9z" />
            <circle cx="15.500" cy="9" r="4" />
          </svg>
        </Toggle>
      </Cell>
      <Cell className="bg-[#4e6d95]">
        <Toggle label="Graphics performance">
          <svg width="20" height="20" viewBox="0 0 20 20" fill="none" stroke="#8ea1b8">
            <circle cx="10" cy="10" r="9" fill="#68829f" />
            <path d="M9 14l8-7" stroke="#a9b6c6" strokeWidth="2" />
          </svg>
        </Toggle>
      </Cell>
      <Cell className="w-1 bg-[#3b4453]" />
      <Cell>
        <Toggle label="Clean screen">
          <svg width="20" height="15" viewBox="0 0 20 15" fill="none" stroke="#c3c5c9">
            <path d="M.5.5h19v14H.5z" />
            <path d="M13 6l4-4M6 9l-4 4" />
            <path d="M13 2h4.500v4.500zM2.500 8.500V13H7z" fill="#dfe0e3" stroke="none" />
          </svg>
        </Toggle>
        <Toggle label="Customization">
          <svg width="20" height="18" viewBox="0 0 20 18" stroke="#dfe0e3" strokeWidth="2"><path d="M0 1h20M0 9h20M0 17h20" /></svg>
        </Toggle>
      </Cell>
    </footer>
  );
}

export default function App() {
  return (
    <div className="flex min-h-screen flex-col overflow-hidden border border-[#0696d7] bg-[#222933] font-['Open_Sans','Noto_Sans',sans-serif]">
      <TitleBar />
      <RibbonTabs />
      <Ribbon />
      <DocumentTabs />
      <ModelSpace />
      <LayoutTabs />
      <StatusBar />
    </div>
  );
}
